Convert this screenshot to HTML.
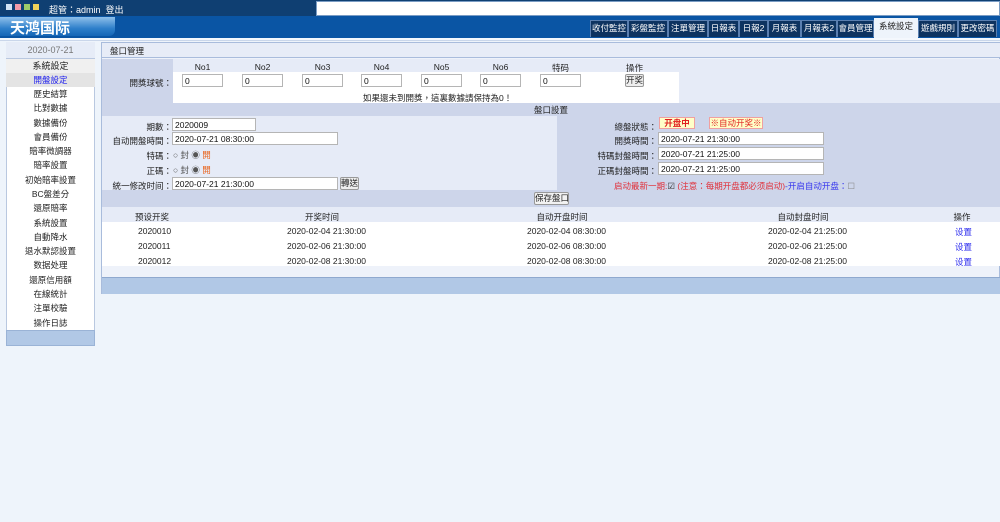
<!DOCTYPE html>
<html><head><meta charset="utf-8"><style>
*{margin:0;padding:0;box-sizing:border-box}
body{width:1000px;height:522px;background:#eef4fb;font-family:"Liberation Sans","Noto Sans CJK TC",sans-serif;font-size:8.5px;color:#222;position:relative;overflow:hidden}
.a{position:absolute}
.t{position:absolute;white-space:nowrap}
.c{text-align:center}
.r{text-align:right}
input.i{position:absolute;height:13px;border:1px solid #b5b5b5;background:#fff;font-size:8.5px;padding-left:2px;font-family:inherit;color:#111}
.btn{position:absolute;background:#eee;border:1px solid #999;border-radius:2px;font-size:8.5px;text-align:center;line-height:11px;white-space:nowrap;overflow:hidden;padding:0}
.tab{position:absolute;top:20px;height:17px;background:#0d3360;border:1px solid #5a7fb0;border-bottom:none;color:#fff;font-size:8.5px;text-align:center;line-height:15px;white-space:nowrap}
.side{position:absolute;left:6px;width:89px;text-align:center;font-size:8.5px}
</style></head><body>
<div class="a" style="left:0;top:0;width:1000px;height:16px;background:#0f3f72"></div>
<div class="a" style="left:6px;top:4px;width:6px;height:6px;background:#cfe1f4"></div>
<div class="a" style="left:15px;top:4px;width:6px;height:6px;background:#f29aa8"></div>
<div class="a" style="left:24px;top:4px;width:6px;height:6px;background:#9ccb6a"></div>
<div class="a" style="left:33px;top:4px;width:6px;height:6px;background:#f0d25a"></div>
<div class="t" style="left:49px;top:3px;color:#fff;font-size:9px">超管：admin&nbsp;&nbsp;登出</div>
<div class="a" style="left:316px;top:1px;width:684px;height:15px;background:#fff;border:1px solid #7a9cc4"></div>
<div class="a" style="left:0;top:16px;width:1000px;height:22px;background:#0a55a4"></div>
<div class="a" style="left:0;top:17px;width:115px;height:19px;background:linear-gradient(#8fc0ea,#2e7fca 60%,#1566b6);border-radius:0 0 6px 0"></div>
<div class="t" style="left:10px;top:17px;color:#fff;font-size:15px;font-weight:bold">天鸿国际</div>
<div class="tab" style="left:590px;width:38px">收付監控</div>
<div class="tab" style="left:628px;width:40px">彩盤監控</div>
<div class="tab" style="left:668px;width:40px">注單管理</div>
<div class="tab" style="left:708px;width:31px">日報表</div>
<div class="tab" style="left:739px;width:29px">日報2</div>
<div class="tab" style="left:768px;width:33px">月報表</div>
<div class="tab" style="left:801px;width:36px">月報表2</div>
<div class="tab" style="left:837px;width:37px">會員管理</div>
<div class="tab" style="left:874px;width:44px;top:18px;height:20px;background:#eef4fb;color:#222;border-color:#eef4fb">系統設定</div>
<div class="tab" style="left:918px;width:40px">遊戲規則</div>
<div class="tab" style="left:958px;width:39px">更改密碼</div>
<div class="a" style="left:0;top:38px;width:1000px;height:3px;background:#f4f8fd;border-bottom:1px solid #c9d6ea"></div>

<div class="a" style="left:6px;top:42px;width:89px;height:304px;background:#fff;border:1px solid #b9c8e0"></div>
<div class="side" style="top:42px;height:17px;line-height:17px;background:#e6ecf7;color:#777;font-size:9px;border-bottom:1px solid #b9c8e0">2020-07-21</div>
<div class="side" style="top:59px;height:14px;line-height:14px;background:#f0f0f0;font-size:9px">系統設定</div>
<div class="side" style="top:73px;height:14px;line-height:14px;background:#e4e4e4;color:#1a1aee">開盤設定</div>
<div class="side" style="top:87px;line-height:14px">歷史結算</div>
<div class="side" style="top:101px;line-height:14px">比對數據</div>
<div class="side" style="top:116px;line-height:14px">數據備份</div>
<div class="side" style="top:130px;line-height:14px">會員備份</div>
<div class="side" style="top:144px;line-height:14px">賠率微調器</div>
<div class="side" style="top:158px;line-height:14px">賠率設置</div>
<div class="side" style="top:173px;line-height:14px">初始賠率設置</div>
<div class="side" style="top:187px;line-height:14px">BC盤差分</div>
<div class="side" style="top:201px;line-height:14px">還原賠率</div>
<div class="side" style="top:216px;line-height:14px">系統設置</div>
<div class="side" style="top:230px;line-height:14px">自動降水</div>
<div class="side" style="top:244px;line-height:14px">退水默認設置</div>
<div class="side" style="top:258px;line-height:14px">数据处理</div>
<div class="side" style="top:273px;line-height:14px">還原信用額</div>
<div class="side" style="top:287px;line-height:14px">在線統計</div>
<div class="side" style="top:301px;line-height:14px">注單校驗</div>
<div class="side" style="top:316px;line-height:14px">操作日誌</div>
<div class="a" style="left:6px;top:330px;width:89px;height:16px;background:#b1c8e6;border:1px solid #9ab3d6"></div>

<div class="a" style="left:101px;top:42px;width:899px;height:252px;background:#eef2fa;border:1px solid #a9bcdc"></div>
<div class="a" style="left:102px;top:43px;width:898px;height:15px;background:#e7ecf7;border-bottom:1px solid #a9bcdc"></div>
<div class="t" style="left:110px;top:45px">盤口管理</div>
<div class="a" style="left:102px;top:59px;width:898px;height:44px;background:#e6ebf7"></div>
<div class="a" style="left:102px;top:59px;width:71px;height:44px;background:#cdd5ea"></div>
<div class="a" style="left:173px;top:72px;width:506px;height:31px;background:#fff"></div>
<div class="t c" style="left:182px;width:41px;top:62px">No1</div>
<div class="t c" style="left:242px;width:41px;top:62px">No2</div>
<div class="t c" style="left:302px;width:41px;top:62px">No3</div>
<div class="t c" style="left:361px;width:41px;top:62px">No4</div>
<div class="t c" style="left:421px;width:41px;top:62px">No5</div>
<div class="t c" style="left:480px;width:41px;top:62px">No6</div>
<div class="t c" style="left:540px;width:41px;top:62px">特码</div>
<div class="t c" style="left:614px;width:41px;top:62px">操作</div>
<div class="t r" style="left:102px;width:70px;top:77px">開獎球號：</div>
<input class="i" style="left:182px;top:74px;width:41px" value="0">
<input class="i" style="left:242px;top:74px;width:41px" value="0">
<input class="i" style="left:302px;top:74px;width:41px" value="0">
<input class="i" style="left:361px;top:74px;width:41px" value="0">
<input class="i" style="left:421px;top:74px;width:41px" value="0">
<input class="i" style="left:480px;top:74px;width:41px" value="0">
<input class="i" style="left:540px;top:74px;width:41px" value="0">
<div class="btn" style="left:625px;top:74px;width:19px;height:13px">开奖</div>
<div class="t" style="left:363px;top:92px">如果還未到開獎，這裏數據請保持為0！</div>

<div class="a" style="left:102px;top:103px;width:898px;height:13px;background:#cdd5ea"></div>
<div class="t c" style="left:102px;width:898px;top:104px">盤口設置</div>
<div class="a" style="left:102px;top:116px;width:455px;height:74px;background:#e6ebf7"></div>
<div class="a" style="left:557px;top:116px;width:443px;height:74px;background:#cdd5ea"></div>
<div class="t r" style="left:102px;width:70px;top:121px">期數：</div>
<input class="i" style="left:172px;top:118px;width:84px" value="2020009">
<div class="t r" style="left:102px;width:70px;top:135px">自动開盤時間：</div>
<input class="i" style="left:172px;top:132px;width:166px" value="2020-07-21 08:30:00">
<div class="t r" style="left:102px;width:70px;top:150px">特碼：</div>
<div class="t" style="left:173px;top:149px;color:#555">○ 封 ◉ <span style="color:#e8641e">開</span></div>
<div class="t r" style="left:102px;width:70px;top:165px">正碼：</div>
<div class="t" style="left:173px;top:164px;color:#555">○ 封 ◉ <span style="color:#e8641e">開</span></div>
<div class="t r" style="left:102px;width:70px;top:180px">統一修改时间：</div>
<input class="i" style="left:172px;top:177px;width:166px" value="2020-07-21 21:30:00">
<div class="btn" style="left:340px;top:177px;width:19px;height:13px">轉送</div>

<div class="t r" style="left:557px;width:100px;top:121px">總盤狀態：</div>
<div class="a" style="left:659px;top:117px;width:36px;height:12px;background:#ffffc8;border:1px solid #f0a0a0;color:#e02020;font-weight:bold;text-align:center;line-height:10px">开盘中</div>
<div class="a" style="left:709px;top:117px;width:54px;height:12px;background:#ffffc8;border:1px solid #f0a0a0;color:#e02020;text-align:center;line-height:10px">※自动开奖※</div>
<div class="t r" style="left:557px;width:100px;top:135px">開獎時間：</div>
<input class="i" style="left:658px;top:132px;width:166px" value="2020-07-21 21:30:00">
<div class="t r" style="left:557px;width:100px;top:150px">特碼封盤時間：</div>
<input class="i" style="left:658px;top:147px;width:166px" value="2020-07-21 21:25:00">
<div class="t r" style="left:557px;width:100px;top:165px">正碼封盤時間：</div>
<input class="i" style="left:658px;top:162px;width:166px" value="2020-07-21 21:25:00">
<div class="t" style="left:614px;top:180px;color:#e0303a">启动最新一期:<span style="color:#333">☑</span> (注意：每期开盘都必须启动)<span style="color:#3333ee">-开启自动开盘：</span><span style="color:#888">☐</span></div>

<div class="a" style="left:102px;top:190px;width:898px;height:17px;background:#cdd5ea"></div>
<div class="btn" style="left:534px;top:192px;width:35px;height:13px;background:#f2f2f2">保存盤口</div>
<div class="a" style="left:102px;top:207px;width:898px;height:15px;background:#e6ebf7"></div>
<div class="a" style="left:102px;top:222px;width:898px;height:44px;background:#fff"></div>
<div class="t c" style="left:112px;width:80px;top:211px">预设开奖</div>
<div class="t c" style="left:272px;width:100px;top:211px">开奖时间</div>
<div class="t c" style="left:512px;width:100px;top:211px">自动开盘时间</div>
<div class="t c" style="left:753px;width:100px;top:211px">自动封盘时间</div>
<div class="t c" style="left:942px;width:40px;top:211px">操作</div>
<div class="t" style="left:138px;top:226px">2020010</div>
<div class="t" style="left:287px;top:226px">2020-02-04 21:30:00</div>
<div class="t" style="left:527px;top:226px">2020-02-04 08:30:00</div>
<div class="t" style="left:768px;top:226px">2020-02-04 21:25:00</div>
<div class="t" style="left:955px;top:226px;color:#2a2aee">设置</div>
<div class="t" style="left:138px;top:241px">2020011</div>
<div class="t" style="left:287px;top:241px">2020-02-06 21:30:00</div>
<div class="t" style="left:527px;top:241px">2020-02-06 08:30:00</div>
<div class="t" style="left:768px;top:241px">2020-02-06 21:25:00</div>
<div class="t" style="left:955px;top:241px;color:#2a2aee">设置</div>
<div class="t" style="left:138px;top:256px">2020012</div>
<div class="t" style="left:287px;top:256px">2020-02-08 21:30:00</div>
<div class="t" style="left:527px;top:256px">2020-02-08 08:30:00</div>
<div class="t" style="left:768px;top:256px">2020-02-08 21:25:00</div>
<div class="t" style="left:955px;top:256px;color:#2a2aee">设置</div>
<div class="a" style="left:102px;top:277px;width:898px;height:17px;background:#b1c8e6;border-top:1px solid #8fa9cf"></div>
</body></html>
